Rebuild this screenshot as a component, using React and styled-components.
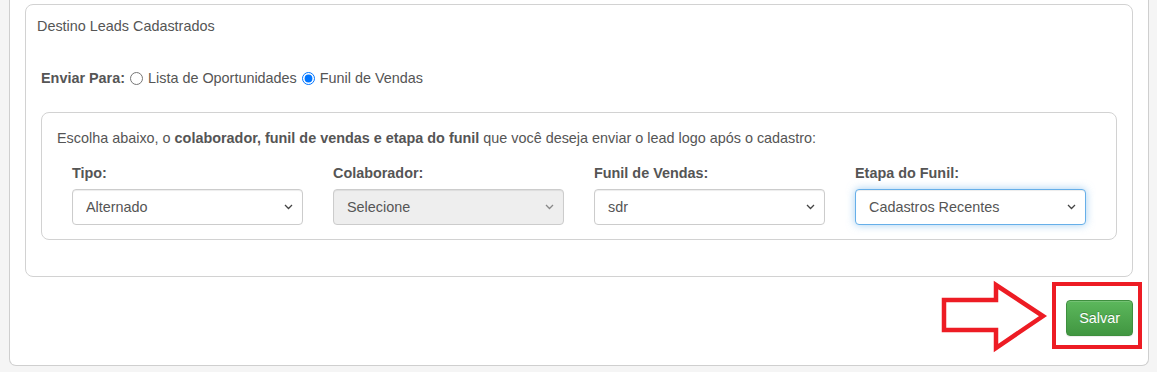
import React from 'react'
import styled, { createGlobalStyle } from 'styled-components'

const Global = createGlobalStyle`
  body {
    margin: 0;
    background: #f5f5f5;
    font-family: "Liberation Sans", Arial, sans-serif;
    font-size: 14.4px;
    color: #555;
  }
`

const Page = styled.div`
  padding: 0 8px 0 9px;
  width: 1140px;
`

const Card = styled.div`
  background: #fff;
  border: 1px solid #cfcfcf;
  border-top: none;
  border-radius: 0 0 7px 7px;
  padding: 4px 15px 29px 15px;
`

const Panel = styled.div`
  border: 1px solid #d2d2d2;
  border-radius: 8px;
  padding: ${p => p.$pad};
`

const Title = styled.div`
  line-height: 20px;
  padding: 11px 11px 0;
  color: #555;
`

const Body = styled.div`
  padding: 0 15px 36px;
`

const SendRow = styled.div`
  display: flex;
  align-items: center;
  line-height: 20px;
  margin: 32px 0 24px;
  color: #555;
  label { display: flex; align-items: center; }
  input { margin: 0 5px; width: 13px; height: 13px; }
`

const Intro = styled.div`
  line-height: 20px;
  b { color: #555; }
`

const Grid = styled.div`
  display: grid;
  grid-template-columns: repeat(4, 1fr);
`

const Col = styled.div`
  padding: 0 15px;
`

const Label = styled.label`
  display: block;
  font-weight: bold;
  line-height: 20px;
  margin: 15px 0 6px;
`

const SelectWrap = styled.div`
  position: relative;
  svg {
    position: absolute;
    right: 10px;
    top: 15px;
    pointer-events: none;
  }
`

const Select = styled.select`
  display: block;
  width: 100%;
  height: 36px;
  padding: 0 13px;
  appearance: none;
  font-family: inherit;
  font-size: 14.4px;
  color: #555;
  background-color: ${p => (p.disabled ? '#eee' : '#fff')};
  border: 1px solid ${p => (p.$focus ? '#66afe9' : '#ccc')};
  border-radius: 4px;
  box-shadow: ${p =>
    p.$focus
      ? 'inset 0 1px 1px rgba(0,0,0,.075), 0 0 8px rgba(102,175,233,.6)'
      : 'inset 0 1px 1px rgba(0,0,0,.075)'};
  opacity: 1;
  outline: none;
`

const Footer = styled.div`
  display: flex;
  justify-content: flex-end;
  margin-top: 23px;
`

const Highlight = styled.div`
  position: relative;
`

const Button = styled.button`
  height: 36px;
  padding: 0 12px;
  font-family: inherit;
  font-size: 14.4px;
  color: #fff;
  border: 1px solid #3e8f3e;
  border-radius: 4px;
  background-image: linear-gradient(to bottom, #5cb85c 0, #419641 100%);
  text-shadow: 0 -1px 0 rgba(0,0,0,.2);
  box-shadow: inset 0 1px 0 rgba(255,255,255,.15), 0 1px 1px rgba(0,0,0,.075);
`

const RedBox = styled.div`
  position: absolute;
  left: -14px;
  top: -18px;
  width: 90px;
  height: 67px;
  box-sizing: border-box;
  border: 4px solid #ed1c24;
`

const Arrow = styled.svg`
  position: absolute;
  left: -127px;
  top: -21px;
`

const Chevron = ({ color }) => (
  <svg width="9" height="6" viewBox="0 0 9 6">
    <path d="M1 1 L4.5 4.5 L8 1" fill="none" stroke={color} strokeWidth="1.3" />
  </svg>
)

const fields = [
  { label: 'Tipo:', value: 'Alternado' },
  { label: 'Colaborador:', value: 'Selecione', disabled: true },
  { label: 'Funil de Vendas:', value: 'sdr' },
  { label: 'Etapa do Funil:', value: 'Cadastros Recentes', focus: true },
]

export default function App() {
  return (
    <Page>
      <Global />
      <Card>
        <Panel $pad="0">
          <Title>Destino Leads Cadastrados</Title>
          <Body>
            <SendRow>
              <b>Enviar Para:</b>
              <label><input type="radio" name="dest" readOnly />Lista de Oportunidades</label>
              <label><input type="radio" name="dest" defaultChecked />Funil de Vendas</label>
            </SendRow>
            <Panel $pad="15px 15px 14px">
              <Intro>
                Escolha abaixo, o <b>colaborador, funil de vendas e etapa do funil</b> que você deseja enviar o lead logo após o cadastro:
              </Intro>
              <Grid>
                {fields.map(f => (
                  <Col key={f.label}>
                    <Label>{f.label}</Label>
                    <SelectWrap>
                      <Select defaultValue={f.value} disabled={f.disabled} $focus={f.focus}>
                        <option>{f.value}</option>
                      </Select>
                      <Chevron color={f.disabled ? '#888' : '#444'} />
                    </SelectWrap>
                  </Col>
                ))}
              </Grid>
            </Panel>
          </Body>
        </Panel>
        <Footer>
          <Highlight>
            <Arrow width="110" height="74" viewBox="0 0 110 74">
              <polygon
                points="5,21 57,21 57,6 104,37 57,69 57,51 5,51"
                fill="none"
                stroke="#ed1c24"
                strokeWidth="4.5"
              />
            </Arrow>
            <RedBox />
            <Button>Salvar</Button>
          </Highlight>
        </Footer>
      </Card>
    </Page>
  )
}
